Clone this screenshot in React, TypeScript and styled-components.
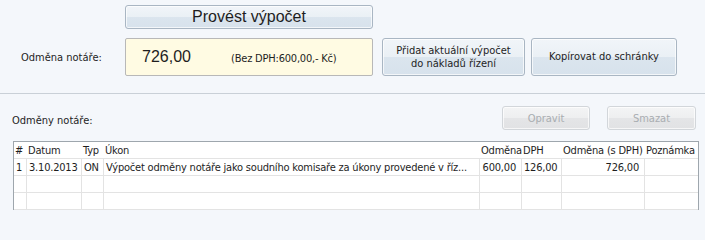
import React from 'react'
import styled, { createGlobalStyle, css } from 'styled-components'

const uiFont = '"DejaVu Sans Condensed", "DejaVu Sans", "Liberation Sans", sans-serif'
const bigFont = '"Liberation Sans", Arial, sans-serif'

const GlobalStyle = createGlobalStyle`
  html, body {
    margin: 0;
    padding: 0;
    background: #f4f7fb;
  }
  body {
    font-family: ${uiFont};
    font-stretch: condensed;
    font-size: 11px;
    color: #1e1e1e;
    overflow: hidden;
  }
`

const Page = styled.div`
  width: 705px;
  height: 210px;
  overflow: hidden;
  display: flex;
  flex-direction: column;
`

const TopSection = styled.div`
  height: 94px;
  padding-top: 5px;
  box-sizing: border-box;
  display: flex;
  flex-direction: column;
  gap: 9px;
`

const Row = styled.div<{ $indent?: number }>`
  display: flex;
  align-items: center;
  padding-left: ${p => p.$indent ?? 0}px;
`

const Label = styled.div`
  width: 125px;
  padding-left: 21px;
  box-sizing: border-box;
`

const Button = styled.button<{ $width: number; $height: number; $big?: boolean; $gap?: number; $disabled?: boolean }>`
  width: ${p => p.$width}px;
  height: ${p => p.$height}px;
  margin-left: ${p => p.$gap ?? 0}px;
  padding: 0;
  border: 1px solid #a9b6c3;
  border-radius: 3px;
  box-shadow: inset 0 0 0 1px rgba(255, 255, 255, 0.7);
  background: linear-gradient(to bottom, #f1f5f9 0%, #eaf0f5 50%, #dbe5ee 51%, #d7e2ec 100%);
  font-family: ${p => (p.$big ? bigFont : uiFont)};
  font-stretch: condensed;
  font-size: ${p => (p.$big ? 16 : 11)}px;
  line-height: 1.2;
  color: #1e1e1e;
  text-align: center;
  cursor: default;
  ${p => p.$disabled && css`
    border-color: #d2d6da;
    background: linear-gradient(to bottom, #f3f4f5 0%, #eeeff0 50%, #e4e5e7 51%, #e1e2e4 100%);
    color: #a9adb1;
  `}
`

const ResultBox = styled.div`
  width: 248px;
  height: 38px;
  box-sizing: border-box;
  border: 1px solid #b8b8b8;
  border-radius: 2px;
  background: #fffbe3;
  display: flex;
  align-items: center;
  padding-left: 16px;
`

const Amount = styled.span`
  font-family: ${bigFont};
  font-size: 16px;
  width: 89px;
`

const AmountNote = styled.span`
  font-size: 11px;
  letter-spacing: -0.2px;
  padding-top: 3px;
`

const Separator = styled.div`
  height: 1px;
  background: #c9d0d7;
`

const ListHeader = styled.div`
  height: 47px;
  display: flex;
  align-items: flex-start;
  padding: 12px 0 0 12px;
  box-sizing: border-box;
`

const ListTitle = styled.div`
  width: 490px;
  padding-top: 8px;
`

const Table = styled.div`
  margin-left: 13px;
  width: 686px;
  background: #ffffff;
  border: 1px solid #9ea6ad;
  border-bottom: none;
  box-sizing: border-box;
  flex: 1;
  letter-spacing: -0.2px;
`

const columns = '13px 55px 22px 376px 42px 40px 83px 1fr'

const HeaderRow = styled.div`
  display: grid;
  grid-template-columns: ${columns};
  height: 17px;
  border-bottom: 1px solid #e3e3e3;
  box-sizing: border-box;
`

const BodyRow = styled(HeaderRow)`
  height: 17px;
`

const Cell = styled.div<{ $align?: 'left' | 'right' }>`
  padding: 2px ${p => (p.$align === 'right' ? '5px' : '0')} 0 2px;
  text-align: ${p => p.$align ?? 'left'};
  line-height: 14px;
  white-space: nowrap;
  overflow: hidden;
  border-right: 1px solid #e3e3e3;
  &:last-child {
    border-right: none;
  }
`

const HeadCell = styled.div`
  padding: 2px 0 0 1px;
  line-height: 14px;
  white-space: nowrap;
`

const headers = ['#', 'Datum', 'Typ', 'Úkon', 'Odměna', 'DPH', 'Odměna (s DPH)', 'Poznámka']

const rows = [
  {
    id: '1',
    date: '3.10.2013',
    type: 'ON',
    action: 'Výpočet odměny notáře jako soudního komisaře za úkony provedené v říz...',
    fee: '600,00',
    vat: '126,00',
    total: '726,00',
    note: '',
  },
]

const App = () => {
  return (
    <Page>
      <GlobalStyle />
      <TopSection>
        <Row $indent={125}>
          <Button $width={248} $height={24} $big>Provést výpočet</Button>
        </Row>
        <Row>
          <Label>Odměna notáře:</Label>
          <ResultBox>
            <Amount>726,00</Amount>
            <AmountNote>(Bez DPH:600,00,- Kč)</AmountNote>
          </ResultBox>
          <Button $width={143} $height={38} $gap={9}>Přidat aktuální výpočet<br />do nákladů řízení</Button>
          <Button $width={146} $height={38} $gap={6}>Kopírovat do schránky</Button>
        </Row>
      </TopSection>
      <Separator />
      <ListHeader>
        <ListTitle>Odměny notáře:</ListTitle>
        <Button $width={88} $height={24} $disabled>Opravit</Button>
        <Button $width={89} $height={24} $gap={17} $disabled>Smazat</Button>
      </ListHeader>
      <Table>
        <HeaderRow>
          {headers.map(h => (
            <HeadCell key={h}>{h}</HeadCell>
          ))}
        </HeaderRow>
        {rows.map(r => (
          <BodyRow key={r.id}>
            <Cell>{r.id}</Cell>
            <Cell>{r.date}</Cell>
            <Cell>{r.type}</Cell>
            <Cell>{r.action}</Cell>
            <Cell $align="right">{r.fee}</Cell>
            <Cell>{r.vat}</Cell>
            <Cell $align="right">{r.total}</Cell>
            <Cell>{r.note}</Cell>
          </BodyRow>
        ))}
        {[0, 1].map(i => (
          <BodyRow key={`empty-${i}`}>
            {headers.map(h => (
              <Cell key={h} />
            ))}
          </BodyRow>
        ))}
      </Table>
    </Page>
  )
}

export default App
